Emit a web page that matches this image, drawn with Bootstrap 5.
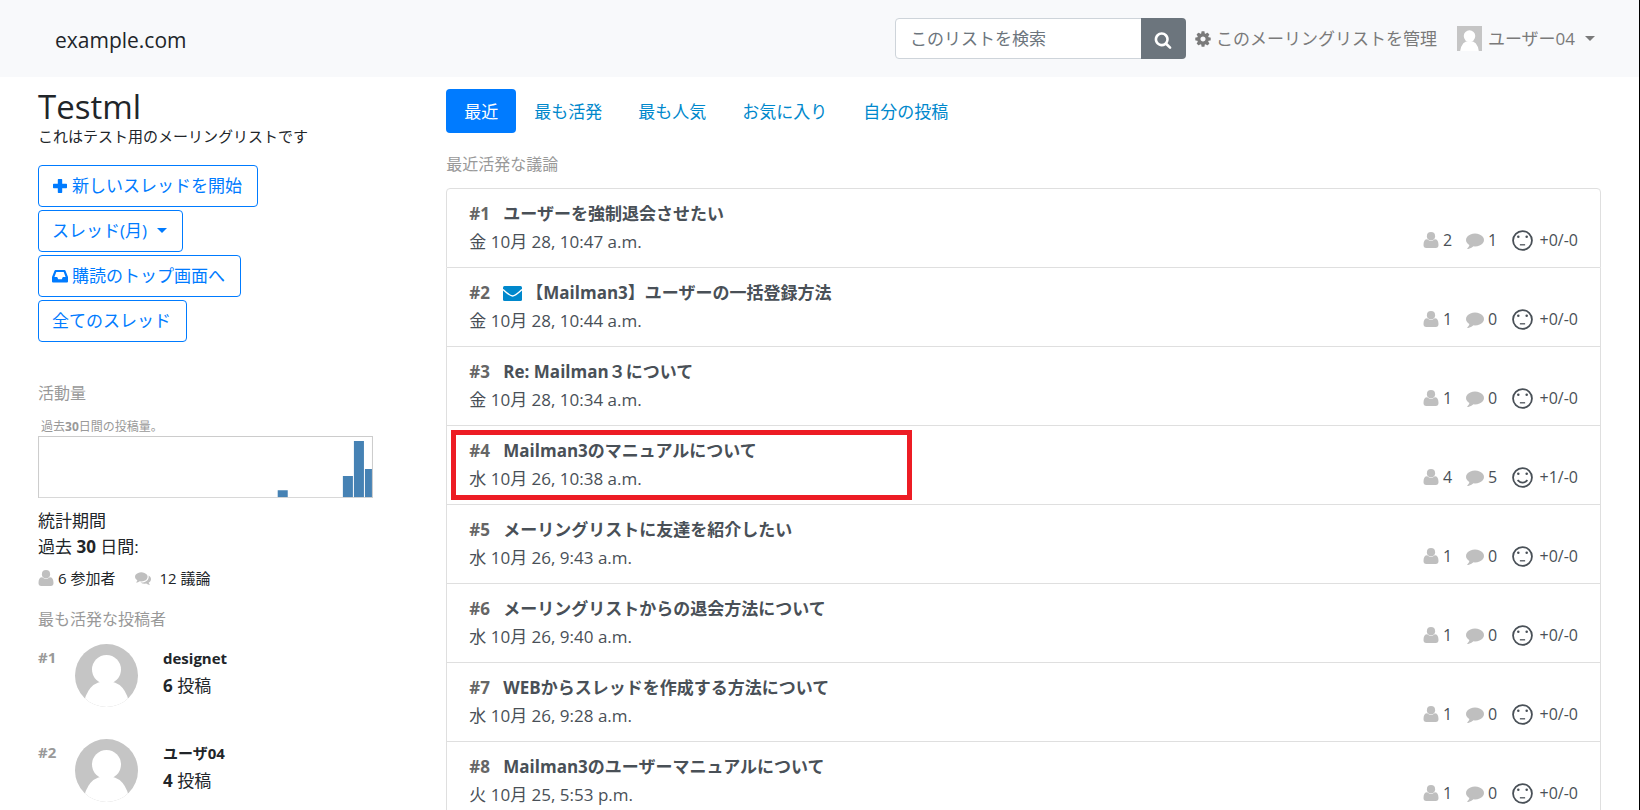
<!DOCTYPE html>
<html lang="ja">
<head>
<meta charset="utf-8">
<meta name="viewport" content="width=device-width, initial-scale=1">
<title>Testml - example.com</title>
<link href="https://cdn.jsdelivr.net/npm/bootstrap@5.3.0/dist/css/bootstrap.min.css" rel="stylesheet">
<style>
  body { font-family: "Open Sans", "Noto Sans CJK JP", sans-serif; font-size: 17px; line-height: 26px; color: #212529; background: #fff; border-right: 1px solid #000; }
  a { text-decoration: none; }
  .ico { width: 16px; height: 16px; fill: currentColor; flex: none; }
  .ico-lg { width: 18px; height: 18px; }
  .pale { fill: #bfbfbf; }
  .topbar { background: #f8f9fb; padding: 18px 44px 18px 55px; }
  .topbar .navbar-brand { font-size: 21px; line-height: 32px; padding: 5px 0 3px; color: #212529; }
  .topbar .input-group { width: 291px; }
  .topbar .form-control { font-size: 17px; line-height: 26px; padding: 6px 14px 7px; border: 1px solid #ced4da; border-radius: 4px; color: #495057; height: 41px; }
  .topbar .form-control::placeholder { color: #6c757d; opacity: 1; }
  .topbar .btn { width: 45px; padding: 0; background: #6c757d; color: #fff; border-radius: 4px; }
  .topbar .nav-link { padding: 0; color: #7a7a7a; }
  .account { margin-left: 20px; }
  .portrait-sm { width: 25px; height: 25px; margin-right: 6px; }
  .dropdown-toggle::after { margin-left: 10px; vertical-align: 4px; border-top-width: 5px; border-left-width: 5px; border-right-width: 5px; }
  .page { padding: 0 38px; }
  .page > .row { --bs-gutter-x: 32px; }
  .sidebar { width: 25.6%; flex: none; padding-top: 11px; }
  .sidebar h1 { font-size: 33px; font-weight: 400; line-height: 38px; margin: 0; }
  .intro { font-size: 15px; line-height: 20px; margin: 0 0 19px; }
  .actions { gap: 3px; }
  .actions .btn { --bs-btn-color: #007bff; --bs-btn-border-color: #007bff; font-size: 17px; line-height: 26px; padding: 7px 15px 7px 13px; border-radius: 4px; }
  .caption { font-size: 16px; line-height: 24px; font-weight: 400; color: #999; margin: 0; }
  .sidebar .activity { margin: 39px 0 13px; }
  .chart { max-width: 335px; margin-bottom: 10px; }
  .chart figcaption { font-size: 12px; line-height: 18px; color: #999; padding-left: 3px; }
  .chart svg { width: 100%; }
  .counts { font-size: 15px; margin: 5px 0 16px; }
  .sidebar .posters { margin-bottom: 13px; }
  .poster { min-height: 95px; line-height: 27px; }
  .poster .rank { width: 37px; font-size: 15px; color: #999; }
  .poster .name { font-size: 15px; }
  .portrait { width: 63px; height: 63px; margin-right: 25px; }
  .main { padding-top: 12px; }
  .nav-pills { --bs-nav-pills-border-radius: 4px; --bs-nav-pills-link-active-bg: #007bff; }
  .nav-pills .nav-link { font-size: 17px; line-height: 28px; padding: 9px 18px 7px; color: #08c; }
  .nav-pills .nav-link.active { color: #fff; }
  .main .caption { margin: 19px 0 12px; }
  .threads { --bs-list-group-border-color: #dfdfdf; --bs-list-group-border-radius: 4px; --bs-list-group-color: #495057; margin-bottom: 24px; }
  .threads .list-group-item { padding: 11px 22px; line-height: 28px; }
  .threads .rank { color: #666; width: 34px; flex: none; }
  .threads a { color: #495057; }
  .mailicon { width: 19px; height: 15px; fill: #08c; flex: none; margin-right: 4px; }
  .tally { font-size: 16px; line-height: 24px; height: 24px; }
  .tally .people { width: 43px; }
  .tally .replies { width: 46px; }
  .tally .votes { width: 66px; }
  .face { width: 21px; height: 21px; }
  .marker { top: 4px; left: 4px; bottom: 4px; width: 40%; border: 5px solid #ed1c24; pointer-events: none; }
</style>
</head>
<body>
<svg class="d-none" aria-hidden="true">
  <symbol id="i-cog" viewBox="0 0 1792 1792"><path d="M1152 896q0-106-75-181t-181-75-181 75-75 181 75 181 181 75 181-75 75-181zm512-109v222q0 12-8 23t-20 13l-185 28q-19 54-39 91 35 50 107 138 10 12 10 25t-9 23q-27 37-99 108t-94 71q-12 0-26-9l-138-108q-44 23-91 38-16 136-29 186-7 28-36 28h-222q-14 0-24.5-8.5t-11.5-21.5l-28-184q-49-16-90-37l-141 107q-10 9-25 9-14 0-25-11-126-114-165-168-7-10-7-23 0-12 8-23 15-21 51-66.5t54-70.5q-27-50-41-99l-183-27q-13-2-21-12.5t-8-23.5v-222q0-12 8-23t19-13l186-28q14-46 39-92-40-57-107-138-10-12-10-24 0-10 9-23 26-36 98.5-107.5t94.5-71.5q13 0 26 10l138 107q44-23 91-38 16-136 29-186 7-28 36-28h222q14 0 24.5 8.5t11.5 21.5l28 184q49 16 90 37l142-107q9-9 24-9 13 0 25 10 129 119 165 170 7 8 7 22 0 12-8 23-15 21-51 66.5t-54 70.5q26 50 41 98l183 28q13 2 21 12.5t8 23.5z"/></symbol>
  <symbol id="i-search" viewBox="0 0 1792 1792"><path d="M1216 832q0-185-131.5-316.5t-316.5-131.5-316.5 131.5-131.5 316.5 131.5 316.5 316.5 131.5 316.5-131.5 131.5-316.5zm512 832q0 52-38 90t-90 38q-54 0-90-38l-343-342q-179 124-399 124-143 0-273.5-55.5t-225-150-150-225-55.5-273.5 55.5-273.5 150-225 225-150 273.5-55.5 273.5 55.5 225 150 150 225 55.5 273.5q0 220-124 399l343 343q37 37 37 90z"/></symbol>
  <symbol id="i-user" viewBox="0 0 15 16"><circle cx="7.500" cy="4.200" r="4.100"/><path d="M0 13c0-3.800 1.200-5.700 3.700-5.700q3.800 3 7.600 0C13.800 7.300 15 9.200 15 13q0 3-2.700 3H2.700Q0 16 0 13z"/></symbol>
  <symbol id="i-comment" viewBox="0 0 1792 1792"><path d="M1792 896q0 174-120 321.5t-326 233-450 85.5q-70 0-145-8-198 175-460 242-49 14-114 22-17 2-30.5-9t-17.5-29v-1q-3-4-.5-12t2-10 4.5-9.5l6-9 7-8.5 8-9q7-8 31-34.5t34.5-38 31-39.5 32.5-51 27-59 26-76q-157-89-247.5-220t-90.5-281q0-174 120-321.5t326-233 450-85.5 450 85.5 326 233 120 321.5z"/></symbol>
  <symbol id="i-comments" viewBox="0 0 1792 1792"><path d="M1408 768q0 139-94 257t-256.5 186.5-353.5 68.5q-86 0-176-16-124 88-278 128-36 9-86 16h-3q-11 0-20.5-8t-11.5-21q-1-3-1-6.5t.5-6.5 2-6l2.5-5 3.5-5.5 4-5 4.5-5 4-4.5q5-6 23-25t26-29.5 22.5-29 25-38.5 20.5-44q-124-72-195-177t-71-224q0-139 94-257t256.5-186.5 353.5-68.5 353.5 68.5 256.5 186.5 94 257zm384 256q0 120-71 224.5t-195 176.5q10 24 20.5 44t25 38.5 22.5 29 26 29.5 23 25q1 1 4 4.5t4.5 5 4 5 3.5 5.5l2.5 5 2 6 .5 6.5-1 6.5q-3 14-13 22t-22 7q-50-7-86-16-154-40-278-128-90 16-176 16-271 0-472-132 58 4 88 4 161 0 309-45t264-129q125-92 192-212t67-254q0-77-23-152 129 71 204 178t75 230z"/></symbol>
  <symbol id="i-plus" viewBox="0 0 16 16"><path d="M6.500 1h3q.7 0 .7.700v4.100h4.100q.7 0 .7.700v3q0 .7-.7.700h-4.100v4.100q0 .7-.7.700h-3q-.7 0-.7-.7v-4.100H1.700Q1 10.200 1 9.500v-3q0-.7.700-.7h4.100V1.700q0-.7.700-.7z"/></symbol>
  <symbol id="i-inbox" viewBox="0 0 16 16"><path fill-rule="evenodd" d="M3.500 2h9q.7 0 1 .7L16 9v4.500q0 1-1 1H1q-1 0-1-1V9l2.500-6.300q.3-.7 1-.7zM4.300 4 2.400 9h2.800l1 2.200h3.600l1-2.200h2.800L11.700 4z"/></symbol>
  <symbol id="i-mail" viewBox="0 0 19 15"><rect width="19" height="15" rx="1.500"/><path d="M0 3.500Q7 10 9.500 10T19 3.500" fill="none" stroke="#fff" stroke-width="1.300"/></symbol>
  <symbol id="i-neutral" viewBox="0 0 20 20"><circle cx="10" cy="10" r="9" fill="none" stroke="currentColor" stroke-width="1.700"/><circle cx="6" cy="6.500" r="1.200"/><circle cx="14" cy="6.500" r="1.200"/><path d="M7.500 13.500h5v1.200h-5z"/></symbol>
  <symbol id="i-smile" viewBox="0 0 20 20"><circle cx="10" cy="10" r="9" fill="none" stroke="currentColor" stroke-width="1.700"/><circle cx="6" cy="6.500" r="1.200"/><circle cx="14" cy="6.500" r="1.200"/><path d="M5.300 12.500q4.700 4.800 9.400 0" fill="none" stroke="currentColor" stroke-width="1.700"/></symbol>
  <symbol id="i-person" viewBox="0 0 63 63"><path fill="#c5c5c5" d="M0 0h63v63H0z"/><circle cx="31.500" cy="25.500" r="14.500" fill="#fff"/><path fill="#fff" d="M8 63Q12 37 31.500 37T55 63z"/></symbol>
</svg>

<nav class="navbar topbar flex-nowrap">
  <a class="navbar-brand m-0" href="#">example.com</a>
  <div class="d-flex align-items-center ms-auto">
    <form class="input-group flex-nowrap" role="search">
      <input class="form-control" type="search" placeholder="このリストを検索" aria-label="このリストを検索">
      <button class="btn" type="button" aria-label="検索"><svg class="ico ico-lg"><use href="#i-search"/></svg></button>
    </form>
    <a class="nav-link d-flex align-items-center gap-1 ms-2 text-nowrap" href="#"><svg class="ico ico-lg"><use href="#i-cog"/></svg>このメーリングリストを管理</a>
    <a class="nav-link account dropdown-toggle d-flex align-items-center text-nowrap" href="#" role="button" data-bs-toggle="dropdown"><svg class="portrait-sm"><use href="#i-person"/></svg>ユーザー04</a>
  </div>
</nav>

<div class="container-fluid page">
  <div class="row flex-nowrap">
    <aside class="col sidebar">
      <h1>Testml</h1>
      <p class="intro">これはテスト用のメーリングリストです</p>
      <div class="actions d-flex flex-column align-items-start">
        <a class="btn btn-outline-primary d-flex align-items-center gap-1" href="#"><svg class="ico"><use href="#i-plus"/></svg>新しいスレッドを開始</a>
        <button class="btn btn-outline-primary dropdown-toggle" type="button" data-bs-toggle="dropdown">スレッド(月)</button>
        <a class="btn btn-outline-primary d-flex align-items-center gap-1" href="#"><svg class="ico"><use href="#i-inbox"/></svg>購読のトップ画面へ</a>
        <a class="btn btn-outline-primary" href="#">全てのスレッド</a>
      </div>
      <h2 class="caption activity">活動量</h2>
      <figure class="chart">
        <figcaption>過去<b>30</b>日間の投稿量。</figcaption>
        <svg class="d-block" viewBox="0 0 334 62" role="img" aria-label="投稿量">
          <path fill="#4682b4" d="M239 54h10v7h-10zM304 40h10v21h-10zM315 5h10v56h-10zM326 33h7v28h-7z"/>
          <path fill="none" stroke="#ccc" d="M.5.5h333v61H.5z"/>
        </svg>
      </figure>
      <div>統計期間</div>
      <div>過去 <b>30</b> 日間:</div>
      <div class="counts d-flex align-items-center">
        <span class="d-flex align-items-center gap-1 me-3"><svg class="ico pale"><use href="#i-user"/></svg>6 参加者</span>
        <span class="d-flex align-items-center gap-1 ms-1"><svg class="ico pale me-1"><use href="#i-comments"/></svg>12 議論</span>
      </div>
      <h2 class="caption posters">最も活発な投稿者</h2>
      <div class="poster d-flex align-items-start">
        <b class="rank">#1</b>
        <svg class="portrait rounded-circle"><use href="#i-person"/></svg>
        <div><b class="name">designet</b><br><b>6</b> 投稿</div>
      </div>
      <div class="poster d-flex align-items-start">
        <b class="rank">#2</b>
        <svg class="portrait rounded-circle"><use href="#i-person"/></svg>
        <div><b class="name">ユーザ04</b><br><b>4</b> 投稿</div>
      </div>
    </aside>

    <main class="col main">
      <ul class="nav nav-pills">
        <li class="nav-item"><a class="nav-link active" aria-current="page" href="#">最近</a></li>
        <li class="nav-item"><a class="nav-link" href="#">最も活発</a></li>
        <li class="nav-item"><a class="nav-link" href="#">最も人気</a></li>
        <li class="nav-item"><a class="nav-link" href="#">お気に入り</a></li>
        <li class="nav-item"><a class="nav-link" href="#">自分の投稿</a></li>
      </ul>
      <h2 class="caption">最近活発な議論</h2>
      <ul class="list-group threads">
        <li class="list-group-item">
          <div class="d-flex"><b class="rank">#1</b><a class="fw-bold" href="#">ユーザーを強制退会させたい</a></div>
          <div class="d-flex justify-content-between"><span>金 10月 28, 10:47 a.m.</span>
            <div class="tally d-flex"><span class="people d-flex align-items-center gap-1"><svg class="ico pale"><use href="#i-user"/></svg>2</span><span class="replies d-flex align-items-center gap-1"><svg class="ico ico-lg pale"><use href="#i-comment"/></svg>1</span><span class="votes d-flex align-items-center justify-content-between"><svg class="ico face"><use href="#i-neutral"/></svg>+0/-0</span></div></div>
        </li>
        <li class="list-group-item">
          <div class="d-flex align-items-center"><b class="rank">#2</b><svg class="mailicon"><use href="#i-mail"/></svg><a class="fw-bold" href="#">【Mailman3】ユーザーの一括登録方法</a></div>
          <div class="d-flex justify-content-between"><span>金 10月 28, 10:44 a.m.</span>
            <div class="tally d-flex"><span class="people d-flex align-items-center gap-1"><svg class="ico pale"><use href="#i-user"/></svg>1</span><span class="replies d-flex align-items-center gap-1"><svg class="ico ico-lg pale"><use href="#i-comment"/></svg>0</span><span class="votes d-flex align-items-center justify-content-between"><svg class="ico face"><use href="#i-neutral"/></svg>+0/-0</span></div></div>
        </li>
        <li class="list-group-item">
          <div class="d-flex"><b class="rank">#3</b><a class="fw-bold" href="#">Re: Mailman３について</a></div>
          <div class="d-flex justify-content-between"><span>金 10月 28, 10:34 a.m.</span>
            <div class="tally d-flex"><span class="people d-flex align-items-center gap-1"><svg class="ico pale"><use href="#i-user"/></svg>1</span><span class="replies d-flex align-items-center gap-1"><svg class="ico ico-lg pale"><use href="#i-comment"/></svg>0</span><span class="votes d-flex align-items-center justify-content-between"><svg class="ico face"><use href="#i-neutral"/></svg>+0/-0</span></div></div>
        </li>
        <li class="list-group-item">
          <div class="marker position-absolute"></div>
          <div class="d-flex"><b class="rank">#4</b><a class="fw-bold" href="#">Mailman3のマニュアルについて</a></div>
          <div class="d-flex justify-content-between"><span>水 10月 26, 10:38 a.m.</span>
            <div class="tally d-flex"><span class="people d-flex align-items-center gap-1"><svg class="ico pale"><use href="#i-user"/></svg>4</span><span class="replies d-flex align-items-center gap-1"><svg class="ico ico-lg pale"><use href="#i-comment"/></svg>5</span><span class="votes d-flex align-items-center justify-content-between"><svg class="ico face"><use href="#i-smile"/></svg>+1/-0</span></div></div>
        </li>
        <li class="list-group-item">
          <div class="d-flex"><b class="rank">#5</b><a class="fw-bold" href="#">メーリングリストに友達を紹介したい</a></div>
          <div class="d-flex justify-content-between"><span>水 10月 26, 9:43 a.m.</span>
            <div class="tally d-flex"><span class="people d-flex align-items-center gap-1"><svg class="ico pale"><use href="#i-user"/></svg>1</span><span class="replies d-flex align-items-center gap-1"><svg class="ico ico-lg pale"><use href="#i-comment"/></svg>0</span><span class="votes d-flex align-items-center justify-content-between"><svg class="ico face"><use href="#i-neutral"/></svg>+0/-0</span></div></div>
        </li>
        <li class="list-group-item">
          <div class="d-flex"><b class="rank">#6</b><a class="fw-bold" href="#">メーリングリストからの退会方法について</a></div>
          <div class="d-flex justify-content-between"><span>水 10月 26, 9:40 a.m.</span>
            <div class="tally d-flex"><span class="people d-flex align-items-center gap-1"><svg class="ico pale"><use href="#i-user"/></svg>1</span><span class="replies d-flex align-items-center gap-1"><svg class="ico ico-lg pale"><use href="#i-comment"/></svg>0</span><span class="votes d-flex align-items-center justify-content-between"><svg class="ico face"><use href="#i-neutral"/></svg>+0/-0</span></div></div>
        </li>
        <li class="list-group-item">
          <div class="d-flex"><b class="rank">#7</b><a class="fw-bold" href="#">WEBからスレッドを作成する方法について</a></div>
          <div class="d-flex justify-content-between"><span>水 10月 26, 9:28 a.m.</span>
            <div class="tally d-flex"><span class="people d-flex align-items-center gap-1"><svg class="ico pale"><use href="#i-user"/></svg>1</span><span class="replies d-flex align-items-center gap-1"><svg class="ico ico-lg pale"><use href="#i-comment"/></svg>0</span><span class="votes d-flex align-items-center justify-content-between"><svg class="ico face"><use href="#i-neutral"/></svg>+0/-0</span></div></div>
        </li>
        <li class="list-group-item">
          <div class="d-flex"><b class="rank">#8</b><a class="fw-bold" href="#">Mailman3のユーザーマニュアルについて</a></div>
          <div class="d-flex justify-content-between"><span>火 10月 25, 5:53 p.m.</span>
            <div class="tally d-flex"><span class="people d-flex align-items-center gap-1"><svg class="ico pale"><use href="#i-user"/></svg>1</span><span class="replies d-flex align-items-center gap-1"><svg class="ico ico-lg pale"><use href="#i-comment"/></svg>0</span><span class="votes d-flex align-items-center justify-content-between"><svg class="ico face"><use href="#i-neutral"/></svg>+0/-0</span></div></div>
        </li>
      </ul>
    </main>
  </div>
</div>
<script src="https://cdn.jsdelivr.net/npm/bootstrap@5.3.0/dist/js/bootstrap.bundle.min.js"></script>
</body>
</html>
